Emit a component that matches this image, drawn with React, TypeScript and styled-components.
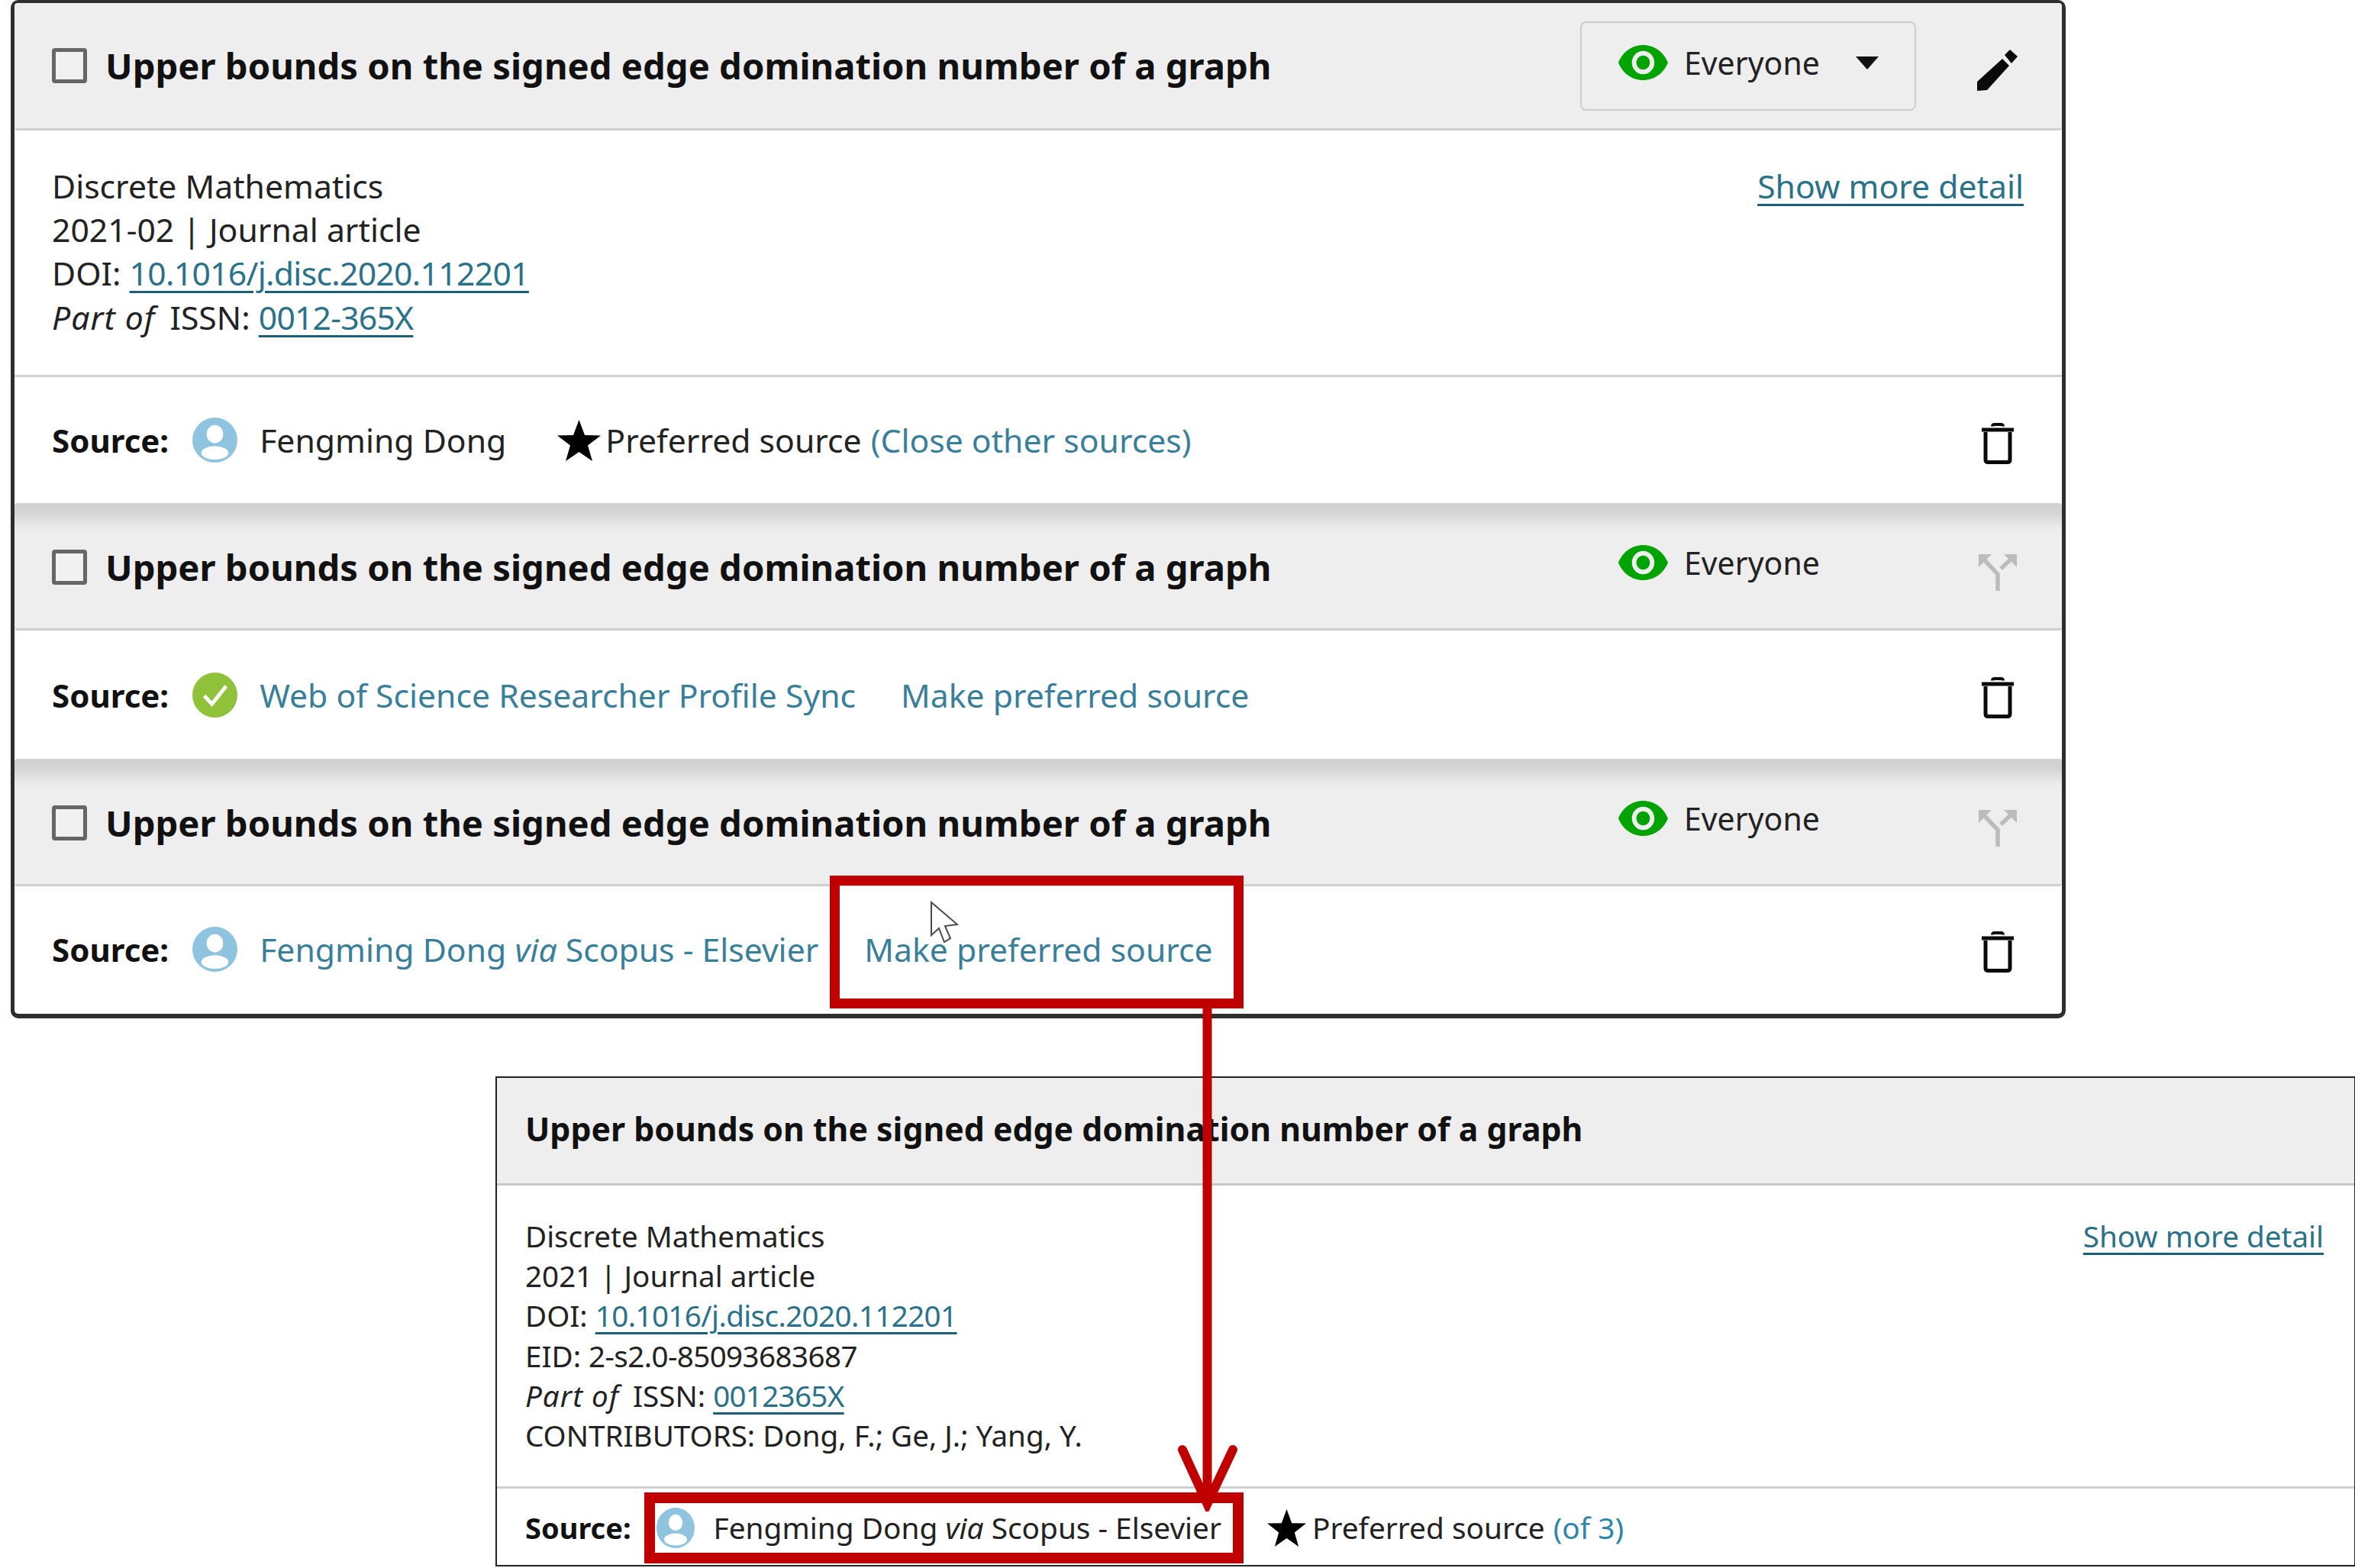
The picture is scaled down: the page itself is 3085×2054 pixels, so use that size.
import React from 'react';
import styled, { createGlobalStyle } from 'styled-components';

const GlobalStyle = createGlobalStyle`
    html, body {
        margin: 0;
        padding: 0;
        background: #ffffff;
    }
    * {
        box-sizing: border-box;
    }
`;

const Page = styled.div`
    position: relative;
    width: 3085px;
    height: 2054px;
    overflow: hidden;
    background: #ffffff;
    color: #222222;
    font-family: 'Noto Sans', 'Open Sans', sans-serif;
    font-size: 42.7px;
`;

const GroupCard = styled.div`
    width: 2692px;
    height: 1334px;
    margin-left: 14px;
    border: 5px solid #2e2e2e;
    border-top-width: 4px;
    border-bottom-width: 6px;
    border-radius: 10px;
`;

const WorkHeader = styled.div<{ $raised?: boolean }>`
    display: flex;
    align-items: flex-start;
    height: 167px;
    padding: ${(p) => (p.$raised ? '26px' : '24px')} 0 0 49px;
    background: ${(p) => (p.$raised ? 'linear-gradient(#cfcfcf 0, #d4d4d4 12px, #eeeeee 36px)' : '#eeeeee')};
    border-bottom: 3px solid #cfcfcf;
    border-radius: 4px;
`;

const CheckBox = styled.div`
    flex: none;
    width: 46px;
    height: 46px;
    margin-top: 35px;
    border: 5px solid #666666;
    border-radius: 4px;
    background: #f1f1f1;
`;

const WorkTitle = styled.div`
    margin: 26px 0 0 24px;
    font-size: 47.2px;
    line-height: 64px;
    font-weight: 700;
    color: #111111;
    white-space: nowrap;
`;

const Visibility = styled.div<{ $boxed?: boolean }>`
    display: flex;
    align-items: center;
    flex: none;
    width: 440px;
    height: 117px;
    margin: ${(p) => (p.$boxed ? '0' : '-2px')} 0 0 auto;
    padding: 0 0 10px 48px;
    border: 2px solid ${(p) => (p.$boxed ? '#cccccc' : 'transparent')};
    border-radius: 8px;
`;

const EyeIcon = styled.svg`
    flex: none;
    width: 65px;
    height: 46px;
    margin-right: 21px;
    fill: #00a300;
`;

const VisibilityLabel = styled.span`
    font-size: 41px;
    line-height: 60px;
    color: #222222;
`;

const Caret = styled.span`
    width: 0;
    height: 0;
    margin: 2px 0 0 47px;
    border-left: 15px solid transparent;
    border-right: 15px solid transparent;
    border-top: 17px solid #111111;
`;

const ActionSlot = styled.div`
    flex: none;
    width: 56px;
    margin: 37px 55px 0 80px;
`;

const PencilIcon = styled.svg`
    display: block;
    width: 54px;
    height: 55px;
    fill: #0a0a0a;
`;

const BranchIcon = styled.svg`
    display: block;
    width: 50px;
    height: 48px;
    margin: 4px 0 0 2px;
    fill: none;
    stroke: #bcbcbc;
    stroke-width: 5.5;
`;

const WorkBody = styled.div`
    display: flex;
    justify-content: space-between;
    height: 323px;
    padding: 44px 50px 0 49px;
    border-bottom: 3px solid #d2d2d2;
    line-height: 57.2px;
`;

const TextLink = styled.a<{ $tight?: number }>`
    color: #2b7188;
    text-decoration: underline;
    text-decoration-color: #1c5f78;
    text-decoration-thickness: 3px;
    text-underline-offset: 7px;
    letter-spacing: ${(p) => p.$tight ?? 0}px;
`;

const PartOf = styled.em`
    margin-right: 8px;
    letter-spacing: 1px;
`;

const SourceRow = styled.div<{ $height: number }>`
    display: flex;
    align-items: center;
    height: ${(p) => p.$height}px;
    padding: 0 63px 0 49px;
    white-space: nowrap;
`;

const SourceLabel = styled.span`
    font-size: 42px;
    font-weight: 700;
    color: #111111;
`;

const Avatar = styled.svg`
    flex: none;
    width: 59px;
    height: 59px;
    margin: 0 29px 0 31px;
`;

const SourceName = styled.span`
    color: #3a7f99;
`;

const PlainName = styled.span`
    color: #222222;
`;

const MakePreferred = styled.span<{ $gap: number }>`
    margin-left: ${(p) => p.$gap}px;
    color: #3a7f99;
`;

const StarIcon = styled.svg`
    flex: none;
    width: 57px;
    height: 54px;
    margin: 0 6px 0 67px;
    fill: #000000;
`;

const CloseSources = styled.span`
    margin-left: 12px;
    color: #3a7f99;
`;

const TrashIcon = styled.svg`
    flex: none;
    width: 42px;
    height: 54px;
    margin: 8px 0 0 auto;
    fill: none;
    stroke: #0a0a0a;
`;

const SingleCard = styled.div`
    width: 2436px;
    height: 642px;
    margin: 76px 0 0 649px;
    border: 2px solid #222222;
    border-right-width: 1px;
`;

const SingleHeader = styled.div`
    height: 141px;
    padding: 38px 0 0 37px;
    background: #eeeeee;
    border-bottom: 3px solid #c8c8c8;
    font-size: 42.8px;
    line-height: 58px;
    font-weight: 700;
    color: #111111;
`;

const SingleBody = styled.div`
    display: flex;
    justify-content: space-between;
    height: 397px;
    padding: 40px 40px 0 37px;
    border-bottom: 3px solid #cfcfcf;
    font-size: 38.6px;
    line-height: 52.2px;
`;

const TightValue = styled.span`
    letter-spacing: -0.6px;
`;

const SingleSource = styled.div`
    display: flex;
    align-items: center;
    height: 100px;
    padding: 2px 0 0 37px;
    font-size: 38.8px;
    white-space: nowrap;
`;

const SingleLabel = styled.span`
    font-size: 38px;
    font-weight: 700;
    color: #111111;
`;

const SingleAvatar = styled.svg`
    flex: none;
    width: 50px;
    height: 53px;
    margin: 0 25px 0 33px;
`;

const SingleStar = styled.svg`
    flex: none;
    width: 51px;
    height: 49px;
    margin: 0 8px 0 60px;
    fill: #000000;
`;

const OfThree = styled.span`
    margin-left: 11px;
    color: #2e86a6;
`;

const PreferredCallout = styled.div`
    position: absolute;
    left: 1087px;
    top: 1147px;
    width: 542px;
    height: 174px;
    border: 13px solid #c00000;
`;

const ResultCallout = styled.div`
    position: absolute;
    left: 844px;
    top: 1955px;
    width: 785px;
    height: 93px;
    border: 14px solid #c00000;
`;

const ArrowOverlay = styled.svg`
    position: absolute;
    left: 1540px;
    top: 1310px;
    width: 90px;
    height: 670px;
    fill: none;
    stroke: #c00000;
    stroke-width: 12;
    stroke-linecap: round;
`;

const Pointer = styled.svg`
    position: absolute;
    left: 1218px;
    top: 1180px;
    width: 38px;
    height: 56px;
    fill: #ffffff;
    stroke: #4a4a4a;
    stroke-width: 2;
`;

const EYE_PATH =
    'M12 4.5C7 4.5 2.73 7.61 1 12c1.73 4.39 6 7.5 11 7.5s9.27-3.11 11-7.5c-1.73-4.39-6-7.5-11-7.5zM12 17c-2.76 0-5-2.24-5-5s2.24-5 5-5 5 2.24 5 5-2.24 5-5 5zm0-8c-1.66 0-3 1.34-3 3s1.34 3 3 3 3-1.34 3-3-1.34-3-3-3z';

const Eye = () => (
    <EyeIcon viewBox="1 4.5 22 15" preserveAspectRatio="none">
        <path d={EYE_PATH} />
    </EyeIcon>
);

const Pencil = () => (
    <PencilIcon viewBox="0 0 54 55">
        <polygon points="33,12 42,21 13,53 0,54 0,42" />
        <polygon points="36,7 43,0 53,9 45,18" />
    </PencilIcon>
);

const Branch = () => (
    <BranchIcon viewBox="0 0 50 48">
        <path d="M25 48V26L6 6M29 19L44 5" />
        <path d="M0 0H17L0 17Z" fill="#bcbcbc" stroke="none" />
        <path d="M50 0H33L50 17Z" fill="#bcbcbc" stroke="none" />
    </BranchIcon>
);

const Trash = () => (
    <TrashIcon viewBox="0 0 42 54">
        <path d="M0 9H42" strokeWidth="5" />
        <path d="M14 4.5Q14 2 17 2H25Q28 2 28 4.5" strokeWidth="4" />
        <path d="M5 12V48Q5 51.5 8.5 51.5H33.5Q37 51.5 37 48V12" strokeWidth="5" />
    </TrashIcon>
);

const PersonGlyph = () => (
    <>
        <circle cx="30" cy="30" r="30" fill="#8fc4e0" />
        <ellipse cx="30" cy="22" rx="11" ry="12" fill="#ffffff" />
        <ellipse cx="30" cy="47" rx="18" ry="9" fill="#ffffff" />
    </>
);

const Star = () => <polygon points="28.5,0 36,20 57,20.5 40,33.5 46,54 28.5,42 11,54 17,33.5 0,20.5 21,20" />;

const Person = () => (
    <Avatar viewBox="0 0 60 60">
        <PersonGlyph />
    </Avatar>
);

const Verified = () => (
    <Avatar viewBox="0 0 60 60">
        <circle cx="30" cy="30" r="30" fill="#8fc23a" />
        <path d="M16 31L26 42L45 18" fill="none" stroke="#ffffff" strokeWidth="5" />
    </Avatar>
);

const VIA_SCOPUS = (
    <>
        Fengming Dong <em>via</em> Scopus - Elsevier
    </>
);

export default function App() {
    return (
        <Page>
            <GlobalStyle />
            <GroupCard>
                <WorkHeader>
                    <CheckBox />
                    <WorkTitle>Upper bounds on the signed edge domination number of a graph</WorkTitle>
                    <Visibility $boxed>
                        <Eye />
                        <VisibilityLabel>Everyone</VisibilityLabel>
                        <Caret />
                    </Visibility>
                    <ActionSlot>
                        <Pencil />
                    </ActionSlot>
                </WorkHeader>
                <WorkBody>
                    <div>
                        Discrete Mathematics
                        <br />
                        2021-02 | Journal article
                        <br />
                        DOI: <TextLink $tight={-0.7}>10.1016/j.disc.2020.112201</TextLink>
                        <br />
                        <PartOf>Part of</PartOf> ISSN: <TextLink $tight={-0.8}>0012-365X</TextLink>
                    </div>
                    <div>
                        <TextLink>Show more detail</TextLink>
                    </div>
                </WorkBody>
                <SourceRow $height={165}>
                    <SourceLabel>Source:</SourceLabel>
                    <Person />
                    <PlainName>Fengming Dong</PlainName>
                    <StarIcon viewBox="0 0 57 54">
                        <Star />
                    </StarIcon>
                    <PlainName>Preferred source</PlainName>
                    <CloseSources>(Close other sources)</CloseSources>
                    <Trash />
                </SourceRow>

                <WorkHeader $raised>
                    <CheckBox />
                    <WorkTitle>Upper bounds on the signed edge domination number of a graph</WorkTitle>
                    <Visibility>
                        <Eye />
                        <VisibilityLabel>Everyone</VisibilityLabel>
                    </Visibility>
                    <ActionSlot>
                        <Branch />
                    </ActionSlot>
                </WorkHeader>
                <SourceRow $height={168}>
                    <SourceLabel>Source:</SourceLabel>
                    <Verified />
                    <SourceName>Web of Science Researcher Profile Sync</SourceName>
                    <MakePreferred $gap={59}>Make preferred source</MakePreferred>
                    <Trash />
                </SourceRow>

                <WorkHeader $raised>
                    <CheckBox />
                    <WorkTitle>Upper bounds on the signed edge domination number of a graph</WorkTitle>
                    <Visibility>
                        <Eye />
                        <VisibilityLabel>Everyone</VisibilityLabel>
                    </Visibility>
                    <ActionSlot>
                        <Branch />
                    </ActionSlot>
                </WorkHeader>
                <SourceRow $height={164}>
                    <SourceLabel>Source:</SourceLabel>
                    <Person />
                    <SourceName>{VIA_SCOPUS}</SourceName>
                    <MakePreferred $gap={60}>Make preferred source</MakePreferred>
                    <Trash />
                </SourceRow>
            </GroupCard>

            <SingleCard>
                <SingleHeader>Upper bounds on the signed edge domination number of a graph</SingleHeader>
                <SingleBody>
                    <div>
                        Discrete Mathematics
                        <br />
                        2021 | Journal article
                        <br />
                        DOI: <TextLink $tight={-0.6}>10.1016/j.disc.2020.112201</TextLink>
                        <br />
                        EID: <TightValue>2-s2.0-85093683687</TightValue>
                        <br />
                        <PartOf>Part of</PartOf> ISSN: <TextLink $tight={-0.7}>0012365X</TextLink>
                        <br />
                        CONTRIBUTORS: Dong, F.; Ge, J.; Yang, Y.
                    </div>
                    <div>
                        <TextLink>Show more detail</TextLink>
                    </div>
                </SingleBody>
                <SingleSource>
                    <SingleLabel>Source:</SingleLabel>
                    <SingleAvatar viewBox="0 0 60 60" preserveAspectRatio="none">
                        <PersonGlyph />
                    </SingleAvatar>
                    <PlainName>{VIA_SCOPUS}</PlainName>
                    <SingleStar viewBox="0 0 57 54" preserveAspectRatio="none">
                        <Star />
                    </SingleStar>
                    <PlainName>Preferred source</PlainName>
                    <OfThree>(of 3)</OfThree>
                </SingleSource>
            </SingleCard>

            <Pointer viewBox="0 0 38 56">
                <path d="M2 2V45L12 36L19 54L27 49L20 33L36 31Z" />
            </Pointer>
            <PreferredCallout />
            <ResultCallout />
            <ArrowOverlay viewBox="0 0 90 670">
                <path d="M41.5 10V656" strokeLinecap="butt" />
                <path d="M9 589L41.5 660L75 589" />
            </ArrowOverlay>
        </Page>
    );
}
